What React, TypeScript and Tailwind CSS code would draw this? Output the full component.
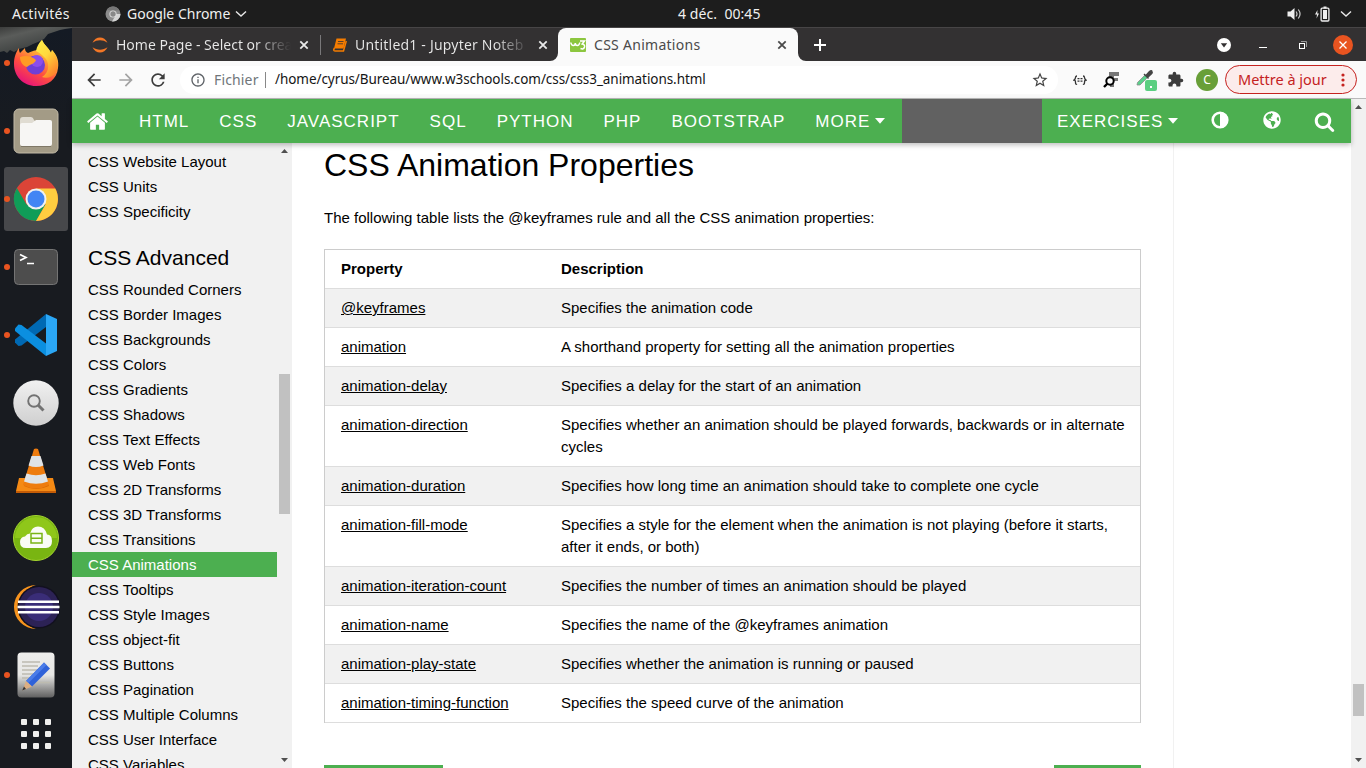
import type { ReactNode } from "react";
import { MdArrowBack, MdArrowForward, MdRefresh, MdInfoOutline, MdStarBorder, MdExtension } from "react-icons/md";
import { FaGlobeAmericas } from "react-icons/fa";

const sideTop = ["CSS Website Layout", "CSS Units", "CSS Specificity"];
const sideAdvanced = [
  "CSS Rounded Corners", "CSS Border Images", "CSS Backgrounds", "CSS Colors", "CSS Gradients",
  "CSS Shadows", "CSS Text Effects", "CSS Web Fonts", "CSS 2D Transforms", "CSS 3D Transforms",
  "CSS Transitions", "CSS Animations", "CSS Tooltips", "CSS Style Images", "CSS object-fit",
  "CSS Buttons", "CSS Pagination", "CSS Multiple Columns", "CSS User Interface", "CSS Variables",
];
const rows: [string, string, boolean?][] = [
  ["@keyframes", "Specifies the animation code"],
  ["animation", "A shorthand property for setting all the animation properties"],
  ["animation-delay", "Specifies a delay for the start of an animation"],
  ["animation-direction", "Specifies whether an animation should be played forwards, backwards or in alternate cycles", true],
  ["animation-duration", "Specifies how long time an animation should take to complete one cycle"],
  ["animation-fill-mode", "Specifies a style for the element when the animation is not playing (before it starts, after it ends, or both)", true],
  ["animation-iteration-count", "Specifies the number of times an animation should be played"],
  ["animation-name", "Specifies the name of the @keyframes animation"],
  ["animation-play-state", "Specifies whether the animation is running or paused"],
  ["animation-timing-function", "Specifies the speed curve of the animation"],
];

function Close({ className }: { className: string }) {
  return (
    <svg viewBox="0 0 10 10" className={className} fill="none" stroke="currentColor" strokeWidth="1.800">
      <path d="M1.300 1.300l7.400 7.400M8.700 1.300L1.300 8.700" />
    </svg>
  );
}

function Chevron() {
  return (
    <svg viewBox="0 0 12 8" className="h-2 w-3" fill="none" stroke="#e8e8e8" strokeWidth="1.4">
      <path d="M1 1.5l5 4.5 5-4.5" />
    </svg>
  );
}

function TopBar() {
  return (
    <div className="relative flex h-[27px] items-center bg-[#1d1d1d] text-[14px] text-[#f0f0f0]">
      <span className="ml-3 w-[93px] tracking-[0.35px]">Activités</span>
      <svg viewBox="0 0 16 16" className="h-4 w-4">
        <circle cx="8" cy="8" r="7.5" fill="#8c8c8c" />
        <path d="M8 8H15.5A7.5 7.5 0 0 1 7 15.4L10.6 9.5z" fill="#d4d4d4" />
        <path d="M1.6 4A7.5 7.5 0 0 1 14.5 4.5H8z" fill="#777" />
        <circle cx="8" cy="8" r="3.6" fill="#e0e0e0" />
        <circle cx="8" cy="8" r="2.7" fill="#888" />
      </svg>
      <span className="ml-[6px] w-[104px] whitespace-nowrap">Google Chrome</span>
      <span className="ml-[4px]"><Chevron /></span>
      <span className="absolute left-[678px] whitespace-pre text-[14px] tracking-[0.06px]">4 déc.  00:45</span>
      <div className="ml-auto flex items-center pr-[14px]">
        <svg viewBox="0 0 15 14" className="mr-[12px] h-[14px] w-[15px]">
          <path d="M.500 4.500h3L7.500 1v12L3.500 9.500h-3z" fill="#eee" />
          <path d="M9 4.500q2 2.500 0 5M11.300 2.500q3.500 4.500 0 9" fill="none" stroke="#ccc" strokeWidth="1.200" />
        </svg>
        <svg viewBox="0 0 16 16" className="mr-[10px] h-4 w-4">
          <path d="M3.500 4L1 8.500h2L2.500 12.500 5 7.500H3.300z" fill="#eee" />
          <rect x="7.100" y="2.200" width="7.800" height="12.800" rx="1" fill="none" stroke="#eee" strokeWidth="1.300" />
          <rect x="9" y="4" width="4" height="9" fill="#eee" />
          <rect x="9.500" y="0.500" width="3" height="2" fill="#eee" />
        </svg>
        <Chevron />
      </div>
    </div>
  );
}

function DockCell({ dot, active, children }: { dot?: boolean; active?: boolean; children: ReactNode }) {
  return (
    <div className="flex h-[68px] shrink-0 items-center px-1">
      <div className={active ? "relative flex h-16 w-16 items-center justify-center rounded-[3px] bg-[#47484b]" : "relative flex h-16 w-16 items-center justify-center"}>
        {dot && <span className="absolute left-0 top-[29px] h-[6px] w-[6px] rounded-full bg-[#e95420]" />}
        {children}
      </div>
    </div>
  );
}

function Dock() {
  return (
    <div className="relative flex w-[72px] shrink-0 flex-col overflow-hidden bg-[#181b20] pt-[2px]">
      <svg viewBox="0 0 72 110" className="absolute left-0 top-0 h-[110px] w-[72px]">
        <defs>
          <linearGradient id="sky" x1="0" y1="0" x2="0.300" y2="1">
            <stop offset="0" stopColor="#3c3d3c" />
            <stop offset="0.180" stopColor="#5a5c5a" />
            <stop offset="0.400" stopColor="#444746" />
            <stop offset="1" stopColor="#202730" />
          </linearGradient>
          <linearGradient id="trees" x1="0" y1="0" x2="0" y2="1">
            <stop offset="0" stopColor="#141a24" />
            <stop offset="1" stopColor="#181b20" />
          </linearGradient>
        </defs>
        <rect width="72" height="60" fill="url(#sky)" />
        <path d="M0 25l4-1 3 2 3-3 4 2 5-3 8-2 6-3 5-2 6-3 4-5 6-2 6-2 5-1 7-1V110H0z" fill="url(#trees)" />
      </svg>
      <DockCell dot>
        <svg viewBox="0 0 46 48" className="h-[48px] w-[46px]">
          <defs>
            <linearGradient id="fx" x1="0.850" y1="0.050" x2="0.300" y2="1">
              <stop offset="0" stopColor="#fff44f" />
              <stop offset="0.350" stopColor="#ffa436" />
              <stop offset="0.650" stopColor="#ff4f3f" />
              <stop offset="1" stopColor="#e5127c" />
            </linearGradient>
            <linearGradient id="fxy" x1="0" y1="0" x2="0.600" y2="1">
              <stop offset="0" stopColor="#fff04a" />
              <stop offset="0.500" stopColor="#ffd93c" />
              <stop offset="1" stopColor="#ff8a2c" />
            </linearGradient>
          </defs>
          <path d="M6 9c0 2 0 3 1 5l5-5c0 3 1 4 3 5 4-2 8-3 10-3 0-4 1-7 4-10 2 5 7 8 9 13l1-3c5 5 7 11 6 18C44 40 35 47 23 47 10 47 1 37 1 25c0-7 2-12 5-16z" fill="url(#fx)" />
          <path d="M23 12c1-5 3-8 6-11 2 5 7 8 9 13l1-3c6 7 7 15 4 22-3 5-9 7-14 5 8-5 8-15 2-20-2-2-4-4-8-6z" fill="url(#fxy)" />
          <circle cx="22.500" cy="26" r="9.500" fill="#6f3fd6" />
          <circle cx="24" cy="22" r="6" fill="#8c4eea" />
          <path d="M7 18c5-2 12-1 16 3-1 4-6 4-9 7-4-1-7-5-7-10z" fill="#ff9b25" />
        </svg>
      </DockCell>
      <DockCell dot>
        <svg viewBox="0 0 46 46" className="h-[46px] w-[46px]">
          <rect x="1" y="1" width="44" height="44" rx="5" fill="#a39b86" stroke="#c2baa7" />
          <path d="M7 12q0-3 3-3h8q2 0 3 3l1 1h15q2 0 2 3v4H7z" fill="#e0dcd2" />
          <path d="M7 17q0-2 2-2h10l4-3h14q2 0 2 2v22q0 2-2 2H9q-2 0-2-2z" fill="#f7f6f4" />
          <path d="M8 38.500h30" stroke="#7f7866" />
        </svg>
      </DockCell>
      <DockCell dot active>
        <svg viewBox="0 0 46 46" className="h-[46px] w-[46px]">
          <circle cx="23" cy="23" r="22" fill="#db4437" />
          <path d="M3.900 12A22 22 0 0 0 23 45L32.500 28.500 13.500 28.500z" fill="#0f9d58" />
          <path d="M23 12.500H42.300A22 22 0 0 1 23 45L32.500 28.500z" fill="#ffcd40" />
          <circle cx="23" cy="23" r="10.500" fill="#f1f1f1" />
          <circle cx="23" cy="23" r="8.500" fill="#4285f4" />
        </svg>
      </DockCell>
      <DockCell dot>
        <svg viewBox="0 0 46 38" className="h-[38px] w-[46px]">
          <rect x="1.500" y="1.500" width="43" height="35" rx="4" fill="#4d4d4d" stroke="#747474" />
          <path d="M7 6.500l6 3-6 3M14 15.500h7" fill="none" stroke="#fff" strokeWidth="1.700" />
        </svg>
      </DockCell>
      <DockCell dot>
        <svg viewBox="0 0 42 42" className="h-[42px] w-[42px]">
          <path d="M31 0V13L6.500 31.500 3.500 32 0 28.500V25.500z" fill="#0069b3" />
          <path d="M0 14.500L3.500 10.500 6.500 11 31 29.500V42L0 17z" fill="#0b8fe0" />
          <path d="M31 0L42 5V37L31 42z" fill="#2ba7f5" />
        </svg>
      </DockCell>
      <DockCell>
        <svg viewBox="0 0 46 46" className="h-[46px] w-[46px]">
          <defs>
            <linearGradient id="mg" x1="0" y1="0" x2="0" y2="1">
              <stop offset="0" stopColor="#f1f1f1" />
              <stop offset="1" stopColor="#cfcfcf" />
            </linearGradient>
          </defs>
          <circle cx="23" cy="23" r="22.700" fill="url(#mg)" />
          <circle cx="21" cy="21" r="5.800" fill="none" stroke="#727272" strokeWidth="1.900" />
          <path d="M25 25l5.500 5.500" stroke="#727272" strokeWidth="3" />
        </svg>
      </DockCell>
      <DockCell>
        <svg viewBox="0 0 40 46" className="h-[46px] w-[40px]">
          <path d="M3 30h34l3 13v2H0v-2z" fill="#f58a14" />
          <path d="M0 43h40v2H0z" fill="#c45c06" />
          <path d="M8 38q12 6 25 0l-3-8H11z" fill="#d96a05" />
          <path d="M18 1q2-1 4 0l11 36q-13 7-26 0z" fill="#ee7c0e" />
          <path d="M15.500 8h9l3 9.500q-7.500 3-15 0z" fill="#dfe3e6" />
          <path d="M10.500 25.500q9.500 3.500 19 0l2.500 8q-12 4.500-24 0z" fill="#dfe3e6" />
        </svg>
      </DockCell>
      <DockCell>
        <svg viewBox="0 0 46 46" className="-mt-[2px] h-[46px] w-[46px]">
          <circle cx="23" cy="23" r="22.500" fill="#79b512" stroke="#a5d52f" />
          <path d="M2 23a21 21 0 0 1 42 0z" fill="#8fc71a" />
          <path d="M13 33q-6 0-6-6 0-5 5-5.500 2-3 5-3 2-7 8-7 7 0 9 8 5 0 5 6.500 0 7-6 7z" fill="#fafcf5" />
          <path d="M18 18.500h11v9.500H18zM18 23.200h11" fill="none" stroke="#7ab416" strokeWidth="1.500" />
        </svg>
      </DockCell>
      <DockCell>
        <svg viewBox="0 0 48 46" className="h-[46px] w-[48px]">
          <path d="M24 1a22 22 0 0 0 0 44A23 23 0 0 1 24 1z" fill="#f7941e" />
          <circle cx="27" cy="23" r="21.500" fill="#12101f" />
          <circle cx="27" cy="23" r="20" fill="#2c2255" />
          <circle cx="27" cy="23" r="14" fill="#3a2d78" />
          <path d="M6 17.800h41M5.500 23h42M6 28.200h41" stroke="#fff" strokeWidth="2.400" />
        </svg>
      </DockCell>
      <DockCell dot>
        <svg viewBox="0 0 38 46" className="h-[46px] w-[38px]">
          <defs>
            <linearGradient id="te" x1="0" y1="0" x2="0" y2="1">
              <stop offset="0" stopColor="#eeeeec" />
              <stop offset="0.500" stopColor="#e6e6e4" />
              <stop offset="1" stopColor="#606060" />
            </linearGradient>
          </defs>
          <rect x="0.500" y="0.500" width="37" height="45" rx="4" fill="url(#te)" />
          <path d="M5 10h18M5 14h16M5 18h16M5 22h15M5 26h13M5 30.500h28" stroke="#bdbbb0" strokeWidth="1.500" />
          <path d="M27 10.500l6 6L15 34.500 9 29z" fill="#2f62d9" />
          <path d="M27 10.500l2.500 2.500L11.500 31 9 29z" fill="#4a7ce8" />
          <path d="M9 29l6 5.500-9.500 4z" fill="#dcae82" />
          <path d="M7 34.500l2 2.500-3.800 1.500z" fill="#333" />
        </svg>
      </DockCell>
      <div className="mt-[10px] grid w-[30px] grid-cols-3 gap-[6px] self-center">
        {Array.from({ length: 9 }, (_, i) => <span key={i} className="h-[6px] w-[6px] rounded-[1px] bg-[#f0f0ee]" />)}
      </div>
    </div>
  );
}

function TabStrip() {
  return (
    <div className="flex h-[34px] shrink-0 border-t border-[#474546] bg-[#333132] text-[14px] text-[#e9e9e9]">
      <div className="flex w-[249px] items-center pl-5">
        <svg viewBox="0 0 16 16" className="h-4 w-4">
          <path d="M.5 5.800C2 2.300 5 .500 8 .500s6 1.800 7.500 5.300C11 2.500 5 2.500.500 5.800zM.500 10.200C2 13.700 5 15.500 8 15.500s6-1.800 7.500-5.300C11 13.500 5 13.500.500 10.200z" fill="#f37726" />
        </svg>
        <span className="ml-2 w-[175px] overflow-hidden whitespace-nowrap bg-gradient-to-r from-[#e9e9e9] from-80% to-[#333132] bg-clip-text text-transparent">Home Page - Select or crea</span>
        <Close className="ml-[8px] h-[10px] w-[10px]" />
        <span className="ml-auto h-5 w-px bg-[#79787a]" />
      </div>
      <div className="flex w-[237px] items-center pl-[11px]">
        <svg viewBox="0 0 15 14" className="h-[14px] w-[15px]">
          <path d="M4.500 0.500h9.500L11.500 10.500H2z" fill="#f57c00" />
          <path d="M2.500 10q-1.800 3 .500 3h8.500L14.300 3" fill="none" stroke="#f57c00" strokeWidth="1.500" />
          <path d="M6 3.500h5.500M5.500 5.800H11" stroke="#333132" strokeWidth=".8" />
        </svg>
        <span className="ml-[8px] w-[175px] overflow-hidden whitespace-nowrap bg-gradient-to-r from-[#e9e9e9] from-80% to-[#333132] bg-clip-text tracking-[0.2px] text-transparent">Untitled1 - Jupyter Noteb</span>
        <Close className="ml-[8px] h-[10px] w-[10px]" />
      </div>
      <div className="relative flex w-[240px] items-center rounded-t-lg bg-[#fafafa] pl-3 text-[#4a4a4a]">
        <svg viewBox="0 0 8 8" className="absolute -left-2 bottom-0 h-2 w-2"><path d="M8 0v8H0a8 8 0 0 0 8-8z" fill="#fafafa" /></svg>
        <svg viewBox="0 0 8 8" className="absolute -right-2 bottom-0 h-2 w-2"><path d="M0 0v8h8a8 8 0 0 1-8-8z" fill="#fafafa" /></svg>
        <svg viewBox="0 0 16 14" className="h-[14px] w-4">
          <rect width="16" height="14" rx="1" fill="#8cc63f" />
          <path d="M.800 4.500q.500 3 2.500 3t2-2.500q0 2.500 2 2.500t2.500-3M10 3h4.500l-2.300 3q2.800.500 2.300 3-.800 2.800-4 1.500" fill="none" stroke="#fff" strokeWidth="1.500" />
        </svg>
        <span className="ml-2 w-[183px] whitespace-nowrap tracking-[0.28px]">CSS Animations</span>
        <Close className="h-[10px] w-[10px]" />
      </div>
      <svg viewBox="0 0 12 12" className="ml-4 h-3 w-3 self-center" fill="none" stroke="#fff" strokeWidth="2"><path d="M6 0v12M0 6h12" /></svg>
      <div className="ml-auto flex items-center pr-[13px]">
        <svg viewBox="0 0 14 14" className="h-[14px] w-[14px]"><circle cx="7" cy="7" r="7" fill="#fff" /><path d="M3.800 5.200h6.400L7 9.500z" fill="#333132" /></svg>
        <span className="ml-[28px] mt-[5px] h-px w-2 bg-white" />
        <svg viewBox="0 0 8 8" className="ml-[32px] h-2 w-2"><path d="M2 .500h5.500V6" fill="none" stroke="#999" /><rect x=".500" y="2.500" width="5" height="5" fill="none" stroke="#fff" /></svg>
        <span className="ml-[26px] flex h-5 w-5 items-center justify-center rounded-full bg-[#e95420] text-white"><svg viewBox="0 0 8 8" className="h-2 w-2" fill="none" stroke="currentColor" strokeWidth="1.300"><path d="M.500.500l7 7M7.500.500l-7 7" /></svg></span>
      </div>
    </div>
  );
}

function Toolbar() {
  return (
    <div className="flex h-[38px] shrink-0 items-center border-b border-[#b9b9b9] bg-[#fafafa] text-[14px] text-[#3c3c3c]">
      <MdArrowBack className="ml-3 h-5 w-5 shrink-0" />
      <MdArrowForward className="ml-3 h-5 w-5 shrink-0 text-[#a3a3a3]" />
      <MdRefresh className="ml-3 h-5 w-5 shrink-0" />
      <div className="ml-3 flex h-7 w-[878px] shrink-0 items-center rounded-full bg-white">
        <MdInfoOutline className="ml-[10px] h-4 w-4 text-[#5f6368]" />
        <span className="ml-[8px] w-[51px] tracking-[0.15px] text-[#70757a]">Fichier</span>
        <span className="h-4 w-px bg-[#888]" />
        <span className="ml-[9px] whitespace-nowrap text-[13.500px] tracking-[-0.065px] text-[#151515]">/home/cyrus/Bureau/www.w3schools.com/css/css3_animations.html</span>
        <MdStarBorder className="ml-auto mr-[9px] h-[18px] w-[18px] text-[#444]" />
      </div>
      <div className="ml-[15px] flex shrink-0 items-center">
        <svg viewBox="0 0 14 10" className="h-[10px] w-[14px]" fill="none" stroke="#333" strokeWidth="1.300"><path d="M4 1Q2.500 1 2.500 2.500T1 5q1.500 0 1.500 2.500T4 9M10 1q1.500 0 1.500 1.500T13 5q-1.500 0-1.500 2.500T10 9M4.500 3.700h2M7.500 3.700h2M4.500 6.200h2M7.500 6.200h2" /></svg>
        <svg viewBox="0 0 17 17" className="ml-[16px] h-[17px] w-[17px]"><path d="M6 1h10v4h-5v2h4v3h-4v6H7V6H6z" fill="#777" /><circle cx="7" cy="10" r="3.700" fill="#fafafa" stroke="#000" strokeWidth="2" /><path d="M4.500 12.500L1 16" stroke="#000" strokeWidth="2.400" /></svg>
        <svg viewBox="0 0 22 22" className="ml-[15px] h-[22px] w-[22px]"><path d="M2.500 13.500L10 6l2.500 2.500L5 16H2z" fill="#5ad08a" stroke="#8a8a8a" strokeWidth=".8" /><path d="M9 5l4.500 4.500M11 6.500l3.500-4q2-1.700 2.500 0 .700 1.300-.500 2.300l-4 3.700z" fill="#444" stroke="#444" strokeWidth="1.400" /><rect x="10" y="11" width="12" height="11" rx="2" fill="#5bcf81" /><rect x="15" y="17" width="2" height="2" fill="#fff" /></svg>
        <MdExtension className="ml-[10px] h-[17px] w-[17px]" />
        <span className="ml-[12px] flex h-[22px] w-[22px] items-center justify-center rounded-full bg-[#689f38] text-[12px] text-white">C</span>
        <div className="ml-[7px] flex h-[29px] w-[132px] items-center rounded-full border border-[#c5221f] bg-[#fceceb] text-[14.500px] text-[#c5221f]">
          <span className="ml-3 w-[90px] whitespace-nowrap">Mettre à jour</span>
          <svg viewBox="0 0 4 14" className="ml-[13px] h-[14px] w-1" fill="#c5221f"><circle cx="2" cy="2" r="1.600" /><circle cx="2" cy="7" r="1.600" /><circle cx="2" cy="12" r="1.600" /></svg>
        </div>
      </div>
    </div>
  );
}

function Caret() {
  return <svg viewBox="0 0 10 6" className="ml-[5px] inline-block h-[6px] w-[10px] align-[3px]"><path d="M0 0h10L5 5.700z" fill="#fff" /></svg>;
}

function SiteNav() {
  return (
    <nav className="z-10 flex h-11 shrink-0 items-center bg-[#4caf50] text-[17px] tracking-[1px] text-white shadow-[0_2px_5px_rgba(0,0,0,0.26)]">
      <svg viewBox="0 0 1792 1792" className="ml-[14px] mr-[15px] h-[23px] w-[23px]" fill="#fff">
        <path d="M1472 992v480q0 26-19 45t-45 19h-384v-384h-256v384h-384q-26 0-45-19t-19-45v-480q0-1 .5-3t.5-3l575-474 575 474q1 2 1 6zm223-69l-62 74q-8 9-21 11h-3q-13 0-21-7l-692-577-692 577q-12 8-24 7-13-2-21-11l-62-74q-8-10-7-23.5t11-21.5l719-599q32-26 76-26t76 26l244 204v-195q0-14 9-23t23-9h192q14 0 23 9t9 23v408l219 182q10 8 11 21.5t-7 23.5z" />
      </svg>
      {["HTML", "CSS", "JAVASCRIPT", "SQL", "PYTHON", "PHP", "BOOTSTRAP"].map((t) => <span key={t} className="px-[15px] pt-[2px]">{t}</span>)}
      <span className="whitespace-nowrap pl-[15px] pt-[2px]">MORE<Caret /></span>
      <div className="ml-auto h-11 w-[140px] bg-[#616161]" />
      <div className="flex w-[309px] items-center">
        <span className="whitespace-nowrap pl-[15px] pt-[2px]">EXERCISES<Caret /></span>
        <svg viewBox="0 0 18 18" className="-mt-[2px] ml-[33px] h-[18px] w-[18px]"><circle cx="9" cy="9" r="7.300" fill="none" stroke="#fff" strokeWidth="2.600" /><path d="M9 1a8 8 0 0 1 0 16z" fill="#fff" /></svg>
        <FaGlobeAmericas className="-mt-[2px] ml-[34px] h-[18px] w-[18px]" />
        <svg viewBox="0 0 1792 1792" className="ml-[33px] h-[21px] w-[21px]" fill="#fff">
          <path d="M1216 832q0-185-131.5-316.5t-316.5-131.5-316.5 131.5-131.5 316.5 131.5 316.5 316.5 131.5 316.5-131.5 131.5-316.5zm512 832q0 52-38 90t-90 38q-54 0-90-38l-343-342q-179 124-399 124-143 0-273.5-55.5t-225-150-150-225-55.5-273.5 55.5-273.5 150-225 225-150 273.5-55.5 273.5 55.5 225 150 150 225 55.5 273.5q0 220-124 399l343 343q37 37 37 90z" />
        </svg>
      </div>
    </nav>
  );
}

function ScrollArrow({ down }: { down?: boolean }) {
  return <svg viewBox="0 0 7 4" className="ml-[4px] h-1 w-[7px] shrink-0"><path d={down ? "M0 0h7L3.500 4z" : "M0 4h7L3.500 0z"} fill="#505050" /></svg>;
}

export default function App() {
  return (
    <div className="flex h-[768px] w-[1366px] flex-col overflow-hidden bg-white font-['Noto_Sans',sans-serif]">
      <TopBar />
      <div className="flex min-h-0 flex-1">
        <Dock />
        <div className="flex min-w-0 flex-1 flex-col">
          <TabStrip />
          <Toolbar />
          <div className="flex min-h-0 flex-1 font-['Liberation_Sans',Arial,sans-serif] text-[15px] text-black">
            <div className="flex min-w-0 flex-1 flex-col">
              <SiteNav />
              <div className="flex min-h-0 flex-1">
                <aside className="flex w-[220px] shrink-0 overflow-hidden bg-[#f1f1f1]">
                  <div className="w-[205px] shrink-0 pt-[6px]">
                    {sideTop.map((t) => <div key={t} className="h-[25px] pl-4 leading-[25px]">{t}</div>)}
                    <h2 className="h-[53px] pl-4 pt-[18px] text-[21px] leading-8">CSS Advanced</h2>
                    {sideAdvanced.map((t) => (
                      <div key={t} className={t === "CSS Animations" ? "h-[25px] bg-[#4caf50] pl-4 leading-[25px] text-white" : "h-[25px] pl-4 leading-[25px]"}>{t}</div>
                    ))}
                  </div>
                  <div className="flex w-[15px] flex-col pb-[6px] pt-[6px]">
                    <ScrollArrow />
                    <div className="ml-[2px] mt-[221px] h-[140px] w-[11px] bg-[#c1c1c1]" />
                    <div className="mt-auto flex"><ScrollArrow down /></div>
                  </div>
                </aside>
                <main className="flex min-w-0 flex-1 flex-col overflow-hidden border-r border-[#f1f1f1] pl-8 pr-8">
                  <h1 className="mt-[-2px] h-12 shrink-0 text-[32px] leading-[48px]">CSS Animation Properties</h1>
                  <p className="mt-[18px] h-[22px] shrink-0 leading-[22px]">The following table lists the @keyframes rule and all the CSS animation properties:</p>
                  <div className="mt-5 w-[817px] shrink-0 border-x border-t border-[#ccc]">
                    <div className="flex h-[39px] border-b border-[#ddd] pl-4 pt-2 font-bold leading-[22px]">
                      <span className="w-[220px]">Property</span><span>Description</span>
                    </div>
                    {rows.map(([name, text, tall], i) => (
                      <div key={name} className={`flex border-b border-[#ddd] pl-4 pt-2 leading-[22px] ${tall ? "h-[61px]" : "h-[39px]"} ${i % 2 ? "bg-white" : "bg-[#f1f1f1]"}`}>
                        <div className="w-[220px] shrink-0"><a className="underline">{name}</a></div>
                        <div className="w-[570px]">{text}</div>
                      </div>
                    ))}
                  </div>
                  <div className="mt-[42px] flex h-10 w-[817px] shrink-0 justify-between">
                    <div className="w-[119px] bg-[#4caf50]" />
                    <div className="w-[87px] bg-[#4caf50]" />
                  </div>
                </main>
                <div className="w-[177px] shrink-0" />
              </div>
            </div>
            <div className="flex w-[15px] shrink-0 flex-col bg-[#f1f1f1] py-[6px]">
              <ScrollArrow />
              <div className="ml-[2px] mt-[575px] h-8 w-[11px] bg-[#c1c1c1]" />
              <div className="mt-auto flex"><ScrollArrow down /></div>
            </div>
          </div>
        </div>
      </div>
    </div>
  );
}
